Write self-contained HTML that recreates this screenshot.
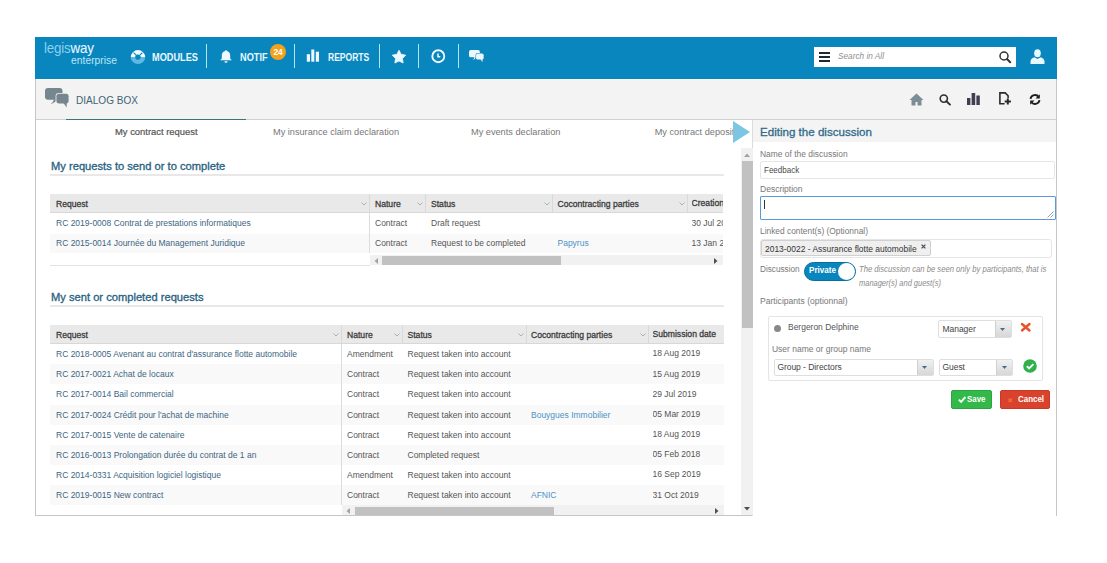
<!DOCTYPE html><html><head><meta charset="utf-8"><style>
html,body{margin:0;padding:0;background:#fff;width:1107px;height:563px;overflow:hidden}
body{position:relative;font-family:"Liberation Sans",sans-serif}
.t{position:absolute;white-space:nowrap}
.r{position:absolute;box-sizing:border-box}
svg.r{overflow:visible}
</style></head><body>
<div class="r" style="left:35px;top:37px;width:1022px;height:479px;border:1px solid #c6c6c6;background:#fff"></div>
<div class="r" style="left:35px;top:37px;width:1022px;height:42px;background:#0886bd"></div>
<div class="t" style="left:43.8px;top:40.10px;color:#555;font-size:15px;line-height:15px;font-weight:normal;font-style:normal;letter-spacing:-0.2px;transform:scaleX(0.89);transform-origin:0 0"><span style="color:#8ccfee">legis</span><span style="color:#e8f7ff;-webkit-text-stroke:0.1px #e8f7ff">way</span></div>
<div class="t" style="left:70.8px;top:55.23px;color:#b9e6f8;font-size:10.6px;line-height:10.6px;font-weight:normal;font-style:normal;letter-spacing:0px;transform:scaleX(0.9765);transform-origin:0 0;">enterprise</div>
<svg class="r" style="left:129.7px;top:49px" width="16" height="16" viewBox="0 0 16 16"><path d="M3 8.3A5 5 0 0 1 13 8.3" fill="none" stroke="#f0faff" stroke-width="4.4"/><path d="M3 7.9A5 5 0 0 0 13 7.9" fill="none" stroke="#5fb9e2" stroke-width="4.4"/><path d="M3.6 3.6L6.2 6.2M12.4 3.6L9.8 6.2" stroke="#0886bd" stroke-width="1.1"/></svg>
<div class="t" style="left:152px;top:52.03px;color:#eaf8ff;font-size:10.6px;line-height:10.6px;font-weight:bold;font-style:normal;letter-spacing:0px;transform:scaleX(0.8684);transform-origin:0 0;">MODULES</div>
<div class="r" style="left:206.2px;top:43.5px;width:1.3px;height:24.5px;background:#b5e4f7"></div>
<div class="r" style="left:294px;top:43.5px;width:1.3px;height:24.5px;background:#b5e4f7"></div>
<div class="r" style="left:378.5px;top:43.5px;width:1.3px;height:24.5px;background:#b5e4f7"></div>
<div class="r" style="left:418px;top:43.5px;width:1.3px;height:24.5px;background:#b5e4f7"></div>
<div class="r" style="left:458px;top:43.5px;width:1.3px;height:24.5px;background:#b5e4f7"></div>
<svg class="r" style="left:219px;top:49px" width="14" height="14" viewBox="0 0 14 14"><path d="M7 1.2c-.6 0-1 .4-1 .9C3.7 2.7 2.8 4.6 2.8 6.8v2.6L1.2 11.3h11.6L11.2 9.4V6.8C11.2 4.6 10.3 2.7 8 2.1 8 1.6 7.6 1.2 7 1.2z" fill="#eef9ff"/><path d="M5.4 12.2a1.6 1.6 0 0 0 3.2 0z" fill="#eef9ff"/></svg>
<div class="t" style="left:240.2px;top:52.03px;color:#eaf8ff;font-size:10.6px;line-height:10.6px;font-weight:bold;font-style:normal;letter-spacing:0px;transform:scaleX(0.8684);transform-origin:0 0;">NOTIF</div>
<div class="r" style="left:270px;top:44px;width:16px;height:16px;border-radius:50%;background:#f4a21b"></div>
<div class="t" style="left:128px;width:300px;text-align:center;top:48.40px;font-size:8.5px;line-height:8.5px;color:#fff;font-weight:bold;letter-spacing:-0.3px;">24</div>
<svg class="r" style="left:306px;top:49px" width="14" height="14" viewBox="0 0 14 14"><rect x="0.8" y="5.2" width="3.2" height="7.5" fill="#eef9ff"/><rect x="5.3" y="0.5" width="3" height="12.2" fill="#eef9ff"/><rect x="9.8" y="2.7" width="3.2" height="10" fill="#eef9ff"/></svg>
<div class="t" style="left:328.4px;top:52.03px;color:#eaf8ff;font-size:10.6px;line-height:10.6px;font-weight:bold;font-style:normal;letter-spacing:0px;transform:scaleX(0.8044);transform-origin:0 0;">REPORTS</div>
<svg class="r" style="left:391.5px;top:50.1px" width="14" height="14" viewBox="0 0 14 14"><path d="M7.00 0.30 L9.12 4.39 L13.66 5.14 L10.42 8.41 L11.11 12.96 L7.00 10.90 L2.89 12.96 L3.58 8.41 L0.34 5.14 L4.88 4.39z" fill="#eef9ff" stroke="#eef9ff" stroke-width="0.9" stroke-linejoin="round"/></svg>
<svg class="r" style="left:431.2px;top:49.2px" width="15" height="15" viewBox="0 0 15 15"><circle cx="7.3" cy="7.2" r="6" fill="none" stroke="#f2fbff" stroke-width="1.9"/><path d="M7 4.6v3.1h2.3" fill="none" stroke="#f2fbff" stroke-width="1.5"/></svg>
<svg class="r" style="left:468.8px;top:49.8px" width="15" height="12" viewBox="0 0 15 12"><g transform="scale(0.62)"><path d="M3 0h11.5a3 3 0 0 1 3 3v5.7a3 3 0 0 1-3 3H11.5Q10.5 14.8 5.6 16Q8.6 14 8.8 11.7H3a3 3 0 0 1-3-3V3a3 3 0 0 1 3-3z" fill="#eef9ff"/><rect x="10.6" y="4.9" width="13.8" height="11.3" rx="3.2" fill="#0886bd"/><rect x="11.4" y="5.7" width="12.2" height="9.7" rx="2.6" fill="#eef9ff"/><path d="M18.5 15L21.6 19.6 21.8 15z" fill="#eef9ff"/></g></svg>
<div class="r" style="left:814px;top:47px;width:202.3px;height:20px;background:#fff"></div>
<div class="r" style="left:819px;top:52px;width:11.3px;height:2px;background:#1c2933"></div>
<div class="r" style="left:819px;top:56px;width:11.3px;height:2px;background:#1c2933"></div>
<div class="r" style="left:819px;top:60px;width:11.3px;height:2px;background:#1c2933"></div>
<div class="t" style="left:838.4px;top:52.35px;color:#8f8f8f;font-size:8.8px;line-height:8.8px;font-weight:normal;font-style:italic;letter-spacing:0px;transform:scaleX(0.9376);transform-origin:0 0;">Search in All</div>
<svg class="r" style="left:999px;top:51px" width="13" height="13" viewBox="0 0 13 13"><circle cx="5" cy="5" r="4" fill="none" stroke="#333" stroke-width="1.5"/><path d="M8 8l3.2 3.2" stroke="#333" stroke-width="2" stroke-linecap="round"/></svg>
<svg class="r" style="left:1030px;top:49px" width="15" height="15" viewBox="0 0 15 15"><ellipse cx="7.5" cy="4.3" rx="3.3" ry="4" fill="#e8f8ff"/><path d="M0.5 15v-2.5c0-2 1.3-3.5 3.8-4.3l3.2 1.8 3.2-1.8c2.5.8 3.8 2.3 3.8 4.3V15z" fill="#e8f8ff"/></svg>
<div class="r" style="left:36px;top:79px;width:1020px;height:41px;background:#f3f3f3;border-bottom:1.5px solid #d0d0d0;border-top:1px solid #fafafa"></div>
<svg class="r" style="left:44.5px;top:88px" width="24" height="20" viewBox="0 0 24 20"><g transform="scale(1.0)"><path d="M3 0h11.5a3 3 0 0 1 3 3v5.7a3 3 0 0 1-3 3H11.5Q10.5 14.8 5.6 16Q8.6 14 8.8 11.7H3a3 3 0 0 1-3-3V3a3 3 0 0 1 3-3z" fill="#76868f"/><rect x="10.6" y="4.9" width="13.8" height="11.3" rx="3.2" fill="#f2f2f2"/><rect x="11.4" y="5.7" width="12.2" height="9.7" rx="2.6" fill="#76868f"/><path d="M18.5 15L21.6 19.6 21.8 15z" fill="#76868f"/></g></svg>
<div class="t" style="left:76px;top:95.03px;color:#3f6373;font-size:10.6px;line-height:10.6px;font-weight:normal;font-style:normal;letter-spacing:0px;transform:scaleX(0.9486);transform-origin:0 0;">DIALOG BOX</div>
<svg class="r" style="left:909px;top:93px" width="15" height="13" viewBox="0 0 15 13"><path d="M7.5 0.5L0.5 7h2v5.5h4v-3.5h2v3.5h4V7h2z" fill="#7d8d97"/></svg>
<svg class="r" style="left:938.5px;top:94px" width="13" height="11" viewBox="0 0 13 11"><circle cx="4.8" cy="4.6" r="3.6" fill="none" stroke="#2d2d2d" stroke-width="1.6"/><path d="M7.4 7.2l3.6 3.4" stroke="#2d2d2d" stroke-width="1.9" stroke-linecap="round"/></svg>
<svg class="r" style="left:967px;top:93px" width="13" height="12" viewBox="0 0 13 12"><rect x="0" y="5" width="3.4" height="7" fill="#3e3d52"/><rect x="4.6" y="0" width="3.6" height="12" fill="#3e3d52"/><rect x="9.4" y="2.5" width="3.4" height="9.5" fill="#3e3d52"/></svg>
<svg class="r" style="left:999px;top:92px" width="13" height="13" viewBox="0 0 13 13"><path d="M5.6 11.7H0.9V0.9h5.3l2.9 2.9v2.4" fill="none" stroke="#2b2b2b" stroke-width="1.6"/><path d="M8.8 6.4v6.2M5.7 9.5h6.2" stroke="#2b2b2b" stroke-width="2"/></svg>
<svg class="r" style="left:1028.5px;top:93.5px" width="12" height="11" viewBox="0 0 12 11"><path d="M1.5 4.8A4.6 4.6 0 0 1 9.8 3" fill="none" stroke="#1e1e1e" stroke-width="1.9"/><path d="M10.8 0.2v4.3H6.5z" fill="#1e1e1e"/><path d="M10.5 6.2A4.6 4.6 0 0 1 2.2 8" fill="none" stroke="#1e1e1e" stroke-width="1.9"/><path d="M1.2 10.8V6.5h4.3z" fill="#1e1e1e"/></svg>
<div class="r" style="left:66px;top:118.6px;width:180px;height:1.8px;background:#3b7479"></div>
<div class="t" style="left:115px;top:127.36px;color:#555;font-size:9.5px;line-height:9.5px;font-weight:normal;font-style:normal;letter-spacing:0px;-webkit-text-stroke:0.2px #555;transform:scaleX(0.9889);transform-origin:0 0;">My contract request</div>
<div class="t" style="left:272.7px;top:127.34px;color:#777;font-size:9.4px;line-height:9.4px;font-weight:normal;font-style:normal;letter-spacing:0px;transform:scaleX(0.9790);transform-origin:0 0;">My insurance claim declaration</div>
<div class="t" style="left:470.6px;top:127.34px;color:#777;font-size:9.4px;line-height:9.4px;font-weight:normal;font-style:normal;letter-spacing:0px;transform:scaleX(0.9802);transform-origin:0 0;">My events declaration</div>
<div class="t" style="left:654.7px;top:124.65px;width:78px;overflow:hidden;font-size:9.2px;line-height:14.72px;color:#777;font-weight:normal;font-style:normal;letter-spacing:0px;">My contract deposit request</div>
<div class="r" style="left:752px;top:119.5px;width:304px;height:396px;background:#fff;border-left:1px solid #dcdcdc"></div>
<div class="r" style="left:753px;top:120px;width:303px;height:21.5px;background:#f4f4f4"></div>
<svg class="r" style="left:732.5px;top:120.5px" width="17" height="22" viewBox="0 0 17 22"><path d="M0 0L17 11L0 22z" fill="#7cc6e3"/></svg>
<div class="t" style="left:760.4px;top:127.36px;color:#2f6a89;font-size:10.8px;line-height:10.8px;font-weight:normal;font-style:normal;letter-spacing:0px;-webkit-text-stroke:0.28px #2f6a89;transform:scaleX(1.0724);transform-origin:0 0;">Editing the discussion</div>
<div class="r" style="left:741px;top:148px;width:11.5px;height:367px;background:#f1f1f1"></div>
<div class="r" style="left:742px;top:160.5px;width:10.5px;height:167.5px;background:#c1c1c1"></div>
<svg class="r" style="left:744px;top:152.5px" width="6" height="4" viewBox="0 0 6 4"><path d="M0 4L3 0.5L6 4z" fill="#a3a3a3"/></svg>
<svg class="r" style="left:744px;top:507px" width="6" height="4" viewBox="0 0 6 4"><path d="M0 0L3 3.5L6 0z" fill="#505050"/></svg>
<div class="t" style="left:50.7px;top:160.59px;color:#2a6282;font-size:11px;line-height:11px;font-weight:normal;font-style:normal;letter-spacing:0px;-webkit-text-stroke:0.32px #2a6282;transform:scaleX(1.0145);transform-origin:0 0;">My requests to send or to complete</div>
<div class="r" style="left:50px;top:173.8px;width:674px;height:2px;background:#e8e8e8"></div>
<div class="r" style="left:50px;top:194px;width:673px;height:19px;background:#e9e9e9;border-bottom:1px solid #d8d8d8"></div>
<div class="t" style="left:56px;top:200.02px;color:#3a3a3a;font-size:8.6px;line-height:8.6px;font-weight:normal;font-style:normal;letter-spacing:0px;-webkit-text-stroke:0.28px #3a3a3a;">Request</div>
<div class="t" style="left:375px;top:200.02px;color:#3a3a3a;font-size:8.6px;line-height:8.6px;font-weight:normal;font-style:normal;letter-spacing:0px;-webkit-text-stroke:0.28px #3a3a3a;">Nature</div>
<div class="r" style="left:369px;top:194px;width:1px;height:19px;background:#d9d9d9"></div>
<svg class="r" style="left:361px;top:201.5px" width="6" height="4" viewBox="0 0 6 4"><path d="M0.5 0.5L3 3L5.5 0.5" fill="none" stroke="#a8a8a8" stroke-width="0.9"/></svg>
<div class="t" style="left:431px;top:200.02px;color:#3a3a3a;font-size:8.6px;line-height:8.6px;font-weight:normal;font-style:normal;letter-spacing:0px;-webkit-text-stroke:0.28px #3a3a3a;">Status</div>
<div class="r" style="left:425px;top:194px;width:1px;height:19px;background:#d9d9d9"></div>
<svg class="r" style="left:417px;top:201.5px" width="6" height="4" viewBox="0 0 6 4"><path d="M0.5 0.5L3 3L5.5 0.5" fill="none" stroke="#a8a8a8" stroke-width="0.9"/></svg>
<div class="t" style="left:557.5px;top:200.02px;color:#3a3a3a;font-size:8.6px;line-height:8.6px;font-weight:normal;font-style:normal;letter-spacing:0px;-webkit-text-stroke:0.28px #3a3a3a;">Cocontracting parties</div>
<div class="r" style="left:551.5px;top:194px;width:1px;height:19px;background:#d9d9d9"></div>
<svg class="r" style="left:543.5px;top:201.5px" width="6" height="4" viewBox="0 0 6 4"><path d="M0.5 0.5L3 3L5.5 0.5" fill="none" stroke="#a8a8a8" stroke-width="0.9"/></svg>
<div class="t" style="left:691.5px;top:197.44px;width:31.5px;overflow:hidden;font-size:8.6px;line-height:13.76px;color:#3a3a3a;font-weight:normal;font-style:normal;letter-spacing:0px;-webkit-text-stroke:0.28px #3a3a3a">Creation date</div>
<div class="r" style="left:686.5px;top:194px;width:1px;height:19px;background:#d9d9d9"></div>
<svg class="r" style="left:678.5px;top:201.5px" width="6" height="4" viewBox="0 0 6 4"><path d="M0.5 0.5L3 3L5.5 0.5" fill="none" stroke="#a8a8a8" stroke-width="0.9"/></svg>
<div class="t" style="left:56px;top:219.30px;color:#3d6683;font-size:8.5px;line-height:8.5px;font-weight:normal;font-style:normal;letter-spacing:0px;">RC 2019-0008 Contrat de prestations informatiques</div>
<div class="t" style="left:375px;top:219.30px;color:#555;font-size:8.5px;line-height:8.5px;font-weight:normal;font-style:normal;letter-spacing:0px;">Contract</div>
<div class="t" style="left:431px;top:219.30px;color:#555;font-size:8.5px;line-height:8.5px;font-weight:normal;font-style:normal;letter-spacing:0px;">Draft request</div>
<div class="t" style="left:691.5px;top:216.75px;width:31.5px;overflow:hidden;font-size:8.5px;line-height:13.60px;color:#555;font-weight:normal;font-style:normal;letter-spacing:0px;">30 Jul 2019</div>
<div class="r" style="left:50px;top:233.57px;width:673px;height:19.9px;background:#f9f9f9"></div>
<div class="t" style="left:56px;top:239.47px;color:#3d6683;font-size:8.5px;line-height:8.5px;font-weight:normal;font-style:normal;letter-spacing:0px;">RC 2015-0014 Journée du Management Juridique</div>
<div class="t" style="left:375px;top:239.47px;color:#555;font-size:8.5px;line-height:8.5px;font-weight:normal;font-style:normal;letter-spacing:0px;">Contract</div>
<div class="t" style="left:431px;top:239.47px;color:#555;font-size:8.5px;line-height:8.5px;font-weight:normal;font-style:normal;letter-spacing:0px;">Request to be completed</div>
<div class="t" style="left:557.5px;top:239.47px;color:#4a93c4;font-size:8.5px;line-height:8.5px;font-weight:normal;font-style:normal;letter-spacing:0px;">Papyrus</div>
<div class="t" style="left:691.5px;top:236.92px;width:31.5px;overflow:hidden;font-size:8.5px;line-height:13.60px;color:#555;font-weight:normal;font-style:normal;letter-spacing:0px;">13 Jan 2020</div>
<div class="r" style="left:369px;top:213px;width:1px;height:40.34px;background:#dcdcdc"></div>
<div class="r" style="left:370px;top:254.5px;width:353px;height:10.5px;background:#f1f1f1"></div>
<div class="r" style="left:382px;top:256.0px;width:179px;height:8.5px;background:#c1c1c1"></div>
<svg class="r" style="left:374px;top:257.5px" width="4" height="6" viewBox="0 0 4 6"><path d="M4 0L0.5 3L4 6z" fill="#a3a3a3"/></svg>
<svg class="r" style="left:714px;top:257.5px" width="4" height="6" viewBox="0 0 4 6"><path d="M0 0L3.5 3L0 6z" fill="#505050"/></svg>
<div class="r" style="left:50px;top:265px;width:320px;height:1px;background:#e2e2e2"></div>
<div class="t" style="left:50.7px;top:291.99px;color:#2a6282;font-size:11px;line-height:11px;font-weight:normal;font-style:normal;letter-spacing:0px;-webkit-text-stroke:0.32px #2a6282;transform:scaleX(1.0139);transform-origin:0 0;">My sent or completed requests</div>
<div class="r" style="left:50px;top:305px;width:674px;height:2px;background:#e8e8e8"></div>
<div class="r" style="left:50px;top:325px;width:674px;height:18.69999999999999px;background:#e9e9e9;border-bottom:1px solid #d8d8d8"></div>
<div class="t" style="left:56px;top:331.02px;color:#3a3a3a;font-size:8.6px;line-height:8.6px;font-weight:normal;font-style:normal;letter-spacing:0px;-webkit-text-stroke:0.28px #3a3a3a;">Request</div>
<div class="t" style="left:347px;top:331.02px;color:#3a3a3a;font-size:8.6px;line-height:8.6px;font-weight:normal;font-style:normal;letter-spacing:0px;-webkit-text-stroke:0.28px #3a3a3a;">Nature</div>
<div class="r" style="left:341px;top:325px;width:1px;height:18.69999999999999px;background:#d9d9d9"></div>
<svg class="r" style="left:333px;top:332.5px" width="6" height="4" viewBox="0 0 6 4"><path d="M0.5 0.5L3 3L5.5 0.5" fill="none" stroke="#a8a8a8" stroke-width="0.9"/></svg>
<div class="t" style="left:407.5px;top:331.02px;color:#3a3a3a;font-size:8.6px;line-height:8.6px;font-weight:normal;font-style:normal;letter-spacing:0px;-webkit-text-stroke:0.28px #3a3a3a;">Status</div>
<div class="r" style="left:401.5px;top:325px;width:1px;height:18.69999999999999px;background:#d9d9d9"></div>
<svg class="r" style="left:393.5px;top:332.5px" width="6" height="4" viewBox="0 0 6 4"><path d="M0.5 0.5L3 3L5.5 0.5" fill="none" stroke="#a8a8a8" stroke-width="0.9"/></svg>
<div class="t" style="left:531px;top:331.02px;color:#3a3a3a;font-size:8.6px;line-height:8.6px;font-weight:normal;font-style:normal;letter-spacing:0px;-webkit-text-stroke:0.28px #3a3a3a;">Cocontracting parties</div>
<div class="r" style="left:525.5px;top:325px;width:1px;height:18.69999999999999px;background:#d9d9d9"></div>
<svg class="r" style="left:517.5px;top:332.5px" width="6" height="4" viewBox="0 0 6 4"><path d="M0.5 0.5L3 3L5.5 0.5" fill="none" stroke="#a8a8a8" stroke-width="0.9"/></svg>
<div class="t" style="left:652.5px;top:328.44px;width:71.5px;overflow:hidden;font-size:8.6px;line-height:13.76px;color:#3a3a3a;font-weight:normal;font-style:normal;letter-spacing:0px;-webkit-text-stroke:0.28px #3a3a3a">Submission date</div>
<div class="r" style="left:647.5px;top:325px;width:1px;height:18.69999999999999px;background:#d9d9d9"></div>
<svg class="r" style="left:639.5px;top:332.5px" width="6" height="4" viewBox="0 0 6 4"><path d="M0.5 0.5L3 3L5.5 0.5" fill="none" stroke="#a8a8a8" stroke-width="0.9"/></svg>
<div class="t" style="left:56px;top:350.00px;color:#3d6683;font-size:8.5px;line-height:8.5px;font-weight:normal;font-style:normal;letter-spacing:0px;">RC 2018-0005 Avenant au contrat d'assurance flotte automobile</div>
<div class="t" style="left:347px;top:350.00px;color:#555;font-size:8.5px;line-height:8.5px;font-weight:normal;font-style:normal;letter-spacing:0px;">Amendment</div>
<div class="t" style="left:407.5px;top:350.00px;color:#555;font-size:8.5px;line-height:8.5px;font-weight:normal;font-style:normal;letter-spacing:0px;">Request taken into account</div>
<div class="t" style="left:652.5px;top:347.45px;width:71.5px;overflow:hidden;font-size:8.5px;line-height:13.60px;color:#555;font-weight:normal;font-style:normal;letter-spacing:0px;">18 Aug 2019</div>
<div class="r" style="left:50px;top:364.27px;width:674px;height:19.9px;background:#f9f9f9"></div>
<div class="t" style="left:56px;top:370.17px;color:#3d6683;font-size:8.5px;line-height:8.5px;font-weight:normal;font-style:normal;letter-spacing:0px;">RC 2017-0021 Achat de locaux</div>
<div class="t" style="left:347px;top:370.17px;color:#555;font-size:8.5px;line-height:8.5px;font-weight:normal;font-style:normal;letter-spacing:0px;">Contract</div>
<div class="t" style="left:407.5px;top:370.17px;color:#555;font-size:8.5px;line-height:8.5px;font-weight:normal;font-style:normal;letter-spacing:0px;">Request taken into account</div>
<div class="t" style="left:652.5px;top:367.62px;width:71.5px;overflow:hidden;font-size:8.5px;line-height:13.60px;color:#555;font-weight:normal;font-style:normal;letter-spacing:0px;">15 Aug 2019</div>
<div class="t" style="left:56px;top:390.34px;color:#3d6683;font-size:8.5px;line-height:8.5px;font-weight:normal;font-style:normal;letter-spacing:0px;">RC 2017-0014 Bail commercial</div>
<div class="t" style="left:347px;top:390.34px;color:#555;font-size:8.5px;line-height:8.5px;font-weight:normal;font-style:normal;letter-spacing:0px;">Contract</div>
<div class="t" style="left:407.5px;top:390.34px;color:#555;font-size:8.5px;line-height:8.5px;font-weight:normal;font-style:normal;letter-spacing:0px;">Request taken into account</div>
<div class="t" style="left:652.5px;top:387.79px;width:71.5px;overflow:hidden;font-size:8.5px;line-height:13.60px;color:#555;font-weight:normal;font-style:normal;letter-spacing:0px;">29 Jul 2019</div>
<div class="r" style="left:50px;top:404.60999999999996px;width:674px;height:19.9px;background:#f9f9f9"></div>
<div class="t" style="left:56px;top:410.51px;color:#3d6683;font-size:8.5px;line-height:8.5px;font-weight:normal;font-style:normal;letter-spacing:0px;">RC 2017-0024 Crédit pour l'achat de machine</div>
<div class="t" style="left:347px;top:410.51px;color:#555;font-size:8.5px;line-height:8.5px;font-weight:normal;font-style:normal;letter-spacing:0px;">Contract</div>
<div class="t" style="left:407.5px;top:410.51px;color:#555;font-size:8.5px;line-height:8.5px;font-weight:normal;font-style:normal;letter-spacing:0px;">Request taken into account</div>
<div class="t" style="left:531px;top:410.51px;color:#4a93c4;font-size:8.5px;line-height:8.5px;font-weight:normal;font-style:normal;letter-spacing:0px;">Bouygues Immobilier</div>
<div class="t" style="left:652.5px;top:407.96px;width:71.5px;overflow:hidden;font-size:8.5px;line-height:13.60px;color:#555;font-weight:normal;font-style:normal;letter-spacing:0px;">05 Mar 2019</div>
<div class="t" style="left:56px;top:430.68px;color:#3d6683;font-size:8.5px;line-height:8.5px;font-weight:normal;font-style:normal;letter-spacing:0px;">RC 2017-0015 Vente de catenaire</div>
<div class="t" style="left:347px;top:430.68px;color:#555;font-size:8.5px;line-height:8.5px;font-weight:normal;font-style:normal;letter-spacing:0px;">Contract</div>
<div class="t" style="left:407.5px;top:430.68px;color:#555;font-size:8.5px;line-height:8.5px;font-weight:normal;font-style:normal;letter-spacing:0px;">Request taken into account</div>
<div class="t" style="left:652.5px;top:428.13px;width:71.5px;overflow:hidden;font-size:8.5px;line-height:13.60px;color:#555;font-weight:normal;font-style:normal;letter-spacing:0px;">18 Aug 2019</div>
<div class="r" style="left:50px;top:444.95px;width:674px;height:19.9px;background:#f9f9f9"></div>
<div class="t" style="left:56px;top:450.85px;color:#3d6683;font-size:8.5px;line-height:8.5px;font-weight:normal;font-style:normal;letter-spacing:0px;">RC 2016-0013 Prolongation durée du contrat de 1 an</div>
<div class="t" style="left:347px;top:450.85px;color:#555;font-size:8.5px;line-height:8.5px;font-weight:normal;font-style:normal;letter-spacing:0px;">Contract</div>
<div class="t" style="left:407.5px;top:450.85px;color:#555;font-size:8.5px;line-height:8.5px;font-weight:normal;font-style:normal;letter-spacing:0px;">Completed request</div>
<div class="t" style="left:652.5px;top:448.30px;width:71.5px;overflow:hidden;font-size:8.5px;line-height:13.60px;color:#555;font-weight:normal;font-style:normal;letter-spacing:0px;">05 Feb 2018</div>
<div class="t" style="left:56px;top:471.02px;color:#3d6683;font-size:8.5px;line-height:8.5px;font-weight:normal;font-style:normal;letter-spacing:0px;">RC 2014-0331 Acquisition logiciel logistique</div>
<div class="t" style="left:347px;top:471.02px;color:#555;font-size:8.5px;line-height:8.5px;font-weight:normal;font-style:normal;letter-spacing:0px;">Amendment</div>
<div class="t" style="left:407.5px;top:471.02px;color:#555;font-size:8.5px;line-height:8.5px;font-weight:normal;font-style:normal;letter-spacing:0px;">Request taken into account</div>
<div class="t" style="left:652.5px;top:468.47px;width:71.5px;overflow:hidden;font-size:8.5px;line-height:13.60px;color:#555;font-weight:normal;font-style:normal;letter-spacing:0px;">16 Sep 2019</div>
<div class="r" style="left:50px;top:485.28999999999996px;width:674px;height:19.9px;background:#f9f9f9"></div>
<div class="t" style="left:56px;top:491.19px;color:#3d6683;font-size:8.5px;line-height:8.5px;font-weight:normal;font-style:normal;letter-spacing:0px;">RC 2019-0015 New contract</div>
<div class="t" style="left:347px;top:491.19px;color:#555;font-size:8.5px;line-height:8.5px;font-weight:normal;font-style:normal;letter-spacing:0px;">Contract</div>
<div class="t" style="left:407.5px;top:491.19px;color:#555;font-size:8.5px;line-height:8.5px;font-weight:normal;font-style:normal;letter-spacing:0px;">Request taken into account</div>
<div class="t" style="left:531px;top:491.19px;color:#4a93c4;font-size:8.5px;line-height:8.5px;font-weight:normal;font-style:normal;letter-spacing:0px;">AFNIC</div>
<div class="t" style="left:652.5px;top:488.64px;width:71.5px;overflow:hidden;font-size:8.5px;line-height:13.60px;color:#555;font-weight:normal;font-style:normal;letter-spacing:0px;">31 Oct 2019</div>
<div class="r" style="left:341px;top:343.7px;width:1px;height:161.36px;background:#dcdcdc"></div>
<div class="r" style="left:342px;top:505px;width:382px;height:10px;background:#f1f1f1"></div>
<div class="r" style="left:355px;top:506.5px;width:199px;height:8px;background:#c1c1c1"></div>
<svg class="r" style="left:346px;top:508px" width="4" height="6" viewBox="0 0 4 6"><path d="M4 0L0.5 3L4 6z" fill="#a3a3a3"/></svg>
<svg class="r" style="left:715px;top:508px" width="4" height="6" viewBox="0 0 4 6"><path d="M0 0L3.5 3L0 6z" fill="#505050"/></svg>
<div class="t" style="left:760.2px;top:149.77px;color:#777;font-size:8.3px;line-height:8.3px;font-weight:normal;font-style:normal;letter-spacing:0px;transform:scaleX(1.0157);transform-origin:0 0;">Name of the discussion</div>
<div class="r" style="left:760px;top:161px;width:295px;height:17.5px;background:#fff;border:1px solid #e6e6e6;border-radius:2px"></div>
<div class="t" style="left:764.2px;top:165.59px;color:#4a4a4a;font-size:8.4px;line-height:8.4px;font-weight:normal;font-style:normal;letter-spacing:0px;transform:scaleX(0.9570);transform-origin:0 0;">Feedback</div>
<div class="t" style="left:760.2px;top:185.17px;color:#777;font-size:8.3px;line-height:8.3px;font-weight:normal;font-style:normal;letter-spacing:0px;transform:scaleX(1.0261);transform-origin:0 0;">Description</div>
<div class="r" style="left:760px;top:196.4px;width:295.5px;height:23.3px;background:#fff;border:1.5px solid #5b9bd5;border-radius:1px"></div>
<div class="r" style="left:764px;top:200px;width:1px;height:9px;background:#333"></div>
<svg class="r" style="left:1047px;top:211px" width="7" height="7" viewBox="0 0 7 7"><path d="M6.5 0.5L0.5 6.5M6.5 3.5L3.5 6.5" stroke="#888" stroke-width="0.8"/></svg>
<div class="t" style="left:760.2px;top:226.97px;color:#777;font-size:8.3px;line-height:8.3px;font-weight:normal;font-style:normal;letter-spacing:0px;transform:scaleX(1.0093);transform-origin:0 0;">Linked content(s) (Optionnal)</div>
<div class="r" style="left:760px;top:239px;width:291.5px;height:18.8px;background:#fff;border:1px solid #e6e6e6;border-radius:3px"></div>
<div class="r" style="left:761.2px;top:240.2px;width:169.5px;height:16px;background:#efefef;border:1px solid #d0d0d0;border-radius:2px"></div>
<div class="t" style="left:765.4px;top:244.94px;color:#333;font-size:8.7px;line-height:8.7px;font-weight:normal;font-style:normal;letter-spacing:0px;transform:scaleX(0.9718);transform-origin:0 0;">2013-0022 - Assurance flotte automobile</div>
<svg class="r" style="left:921.3px;top:244.3px" width="5" height="5" viewBox="0 0 5 5"><path d="M0.6 0.6L4.4 4.4M4.4 0.6L0.6 4.4" stroke="#4a4f5a" stroke-width="1.3"/></svg>
<div class="t" style="left:760.2px;top:265.17px;color:#777;font-size:8.3px;line-height:8.3px;font-weight:normal;font-style:normal;letter-spacing:0px;transform:scaleX(0.9869);transform-origin:0 0;">Discussion</div>
<div class="r" style="left:804px;top:261.8px;width:52px;height:19px;background:#0886bd;border-radius:10px;border:1px solid #0a6e9c"></div>
<div class="r" style="left:838px;top:263px;width:17px;height:17px;border-radius:50%;background:#fff"></div>
<div class="t" style="left:808.7px;top:266.12px;color:#fff;font-size:8.6px;line-height:8.6px;font-weight:bold;font-style:normal;letter-spacing:0px;transform:scaleX(0.9452);transform-origin:0 0;">Private</div>
<div class="t" style="left:859.3px;top:264.97px;color:#8a8a8a;font-size:8.3px;line-height:8.3px;font-weight:normal;font-style:italic;letter-spacing:0px;transform:scaleX(0.9234);transform-origin:0 0;">The discussion can be seen only by participants, that is</div>
<div class="t" style="left:859.3px;top:279.27px;color:#8a8a8a;font-size:8.3px;line-height:8.3px;font-weight:normal;font-style:italic;letter-spacing:0px;transform:scaleX(0.9014);transform-origin:0 0;">manager(s) and guest(s)</div>
<div class="t" style="left:760.2px;top:296.97px;color:#777;font-size:8.3px;line-height:8.3px;font-weight:normal;font-style:normal;letter-spacing:0px;transform:scaleX(1.0323);transform-origin:0 0;">Participants (optionnal)</div>
<div class="r" style="left:767.5px;top:315.5px;width:275px;height:65px;background:#fff;border:1px solid #e4e4e4;border-radius:2px"></div>
<div class="r" style="left:773.5px;top:325px;width:7px;height:7px;border-radius:50%;background:#888"></div>
<div class="t" style="left:787.6px;top:322.72px;color:#555;font-size:8.6px;line-height:8.6px;font-weight:normal;font-style:normal;letter-spacing:0px;transform:scaleX(0.9850);transform-origin:0 0;">Bergeron Delphine</div>
<div class="r" style="left:938.2px;top:320.3px;width:73.6px;height:17.4px;background:#fff;border:1px solid #dedede;border-radius:2px"></div>
<div class="r" style="left:994.8000000000001px;top:321.3px;width:16px;height:15.399999999999999px;background:linear-gradient(#f0f0f0,#d7d7d7);border-left:1px solid #d0d0d0"></div>
<svg class="r" style="left:1000.3000000000001px;top:328.0px" width="5" height="3" viewBox="0 0 5 3"><path d="M0 0h5L2.5 3z" fill="#4a6b8a"/></svg>
<div class="t" style="left:942.5px;top:325.00px;color:#444;font-size:8.5px;line-height:8.5px;font-weight:normal;font-style:normal;letter-spacing:-0.05px;">Manager</div>
<svg class="r" style="left:1020.5px;top:323.4px" width="9.5" height="8.5" viewBox="0 0 9.5 8.5"><path d="M1 1L8.5 7.5M8.5 1L1 7.5" stroke="#e8522a" stroke-width="2.4" stroke-linecap="round"/></svg>
<div class="t" style="left:772px;top:345.32px;color:#777;font-size:8.6px;line-height:8.6px;font-weight:normal;font-style:normal;letter-spacing:0px;transform:scaleX(0.9869);transform-origin:0 0;">User name or group name</div>
<div class="r" style="left:773.6px;top:359px;width:160.1px;height:16.5px;background:#fff;border:1px solid #dedede;border-radius:2px"></div>
<div class="r" style="left:916.7px;top:360px;width:16px;height:14.5px;background:linear-gradient(#f0f0f0,#d7d7d7);border-left:1px solid #d0d0d0"></div>
<svg class="r" style="left:922.2px;top:366.25px" width="5" height="3" viewBox="0 0 5 3"><path d="M0 0h5L2.5 3z" fill="#4a6b8a"/></svg>
<div class="t" style="left:777.4px;top:363.25px;color:#444;font-size:8.5px;line-height:8.5px;font-weight:normal;font-style:normal;letter-spacing:-0.05px;">Group - Directors</div>
<div class="r" style="left:939.2px;top:359px;width:73.8px;height:16.5px;background:#fff;border:1px solid #dedede;border-radius:2px"></div>
<div class="r" style="left:996.0px;top:360px;width:16px;height:14.5px;background:linear-gradient(#f0f0f0,#d7d7d7);border-left:1px solid #d0d0d0"></div>
<svg class="r" style="left:1001.5px;top:366.25px" width="5" height="3" viewBox="0 0 5 3"><path d="M0 0h5L2.5 3z" fill="#4a6b8a"/></svg>
<div class="t" style="left:942.5px;top:363.25px;color:#444;font-size:8.5px;line-height:8.5px;font-weight:normal;font-style:normal;letter-spacing:-0.05px;">Guest</div>
<svg class="r" style="left:1022.5px;top:359px" width="14" height="14" viewBox="0 0 14 14"><circle cx="7" cy="7" r="6.8" fill="#2db24a"/><path d="M3.8 7.2l2.3 2.3 4.3-4.3" fill="none" stroke="#fff" stroke-width="1.9"/></svg>
<div class="r" style="left:950.7px;top:390.2px;width:41.7px;height:18.8px;background:#33b84a;border-radius:2px;border:1px solid #2aa542"></div>
<svg class="r" style="left:958px;top:395.8px" width="8" height="7" viewBox="0 0 8 7"><path d="M0.8 3.6l2.3 2.3L7.4 1" fill="none" stroke="#f4fff4" stroke-width="1.9"/></svg>
<div class="t" style="left:967.4px;top:395.25px;color:#fff;font-size:8.8px;line-height:8.8px;font-weight:bold;font-style:normal;letter-spacing:0px;transform:scaleX(0.8955);transform-origin:0 0;">Save</div>
<div class="r" style="left:999.5px;top:390.2px;width:50.7px;height:18.8px;background:#d9432e;border-radius:2px;border:1px solid #c73a27"></div>
<svg class="r" style="left:1008.3px;top:397.5px" width="4.5" height="4.5" viewBox="0 0 4.5 4.5"><path d="M0.6 0.6L3.9 3.9M3.9 0.6L0.6 3.9" stroke="#f26a3a" stroke-width="1.5"/></svg>
<div class="t" style="left:1018.1px;top:395.25px;color:#fff;font-size:8.8px;line-height:8.8px;font-weight:bold;font-style:normal;letter-spacing:0px;transform:scaleX(0.9009);transform-origin:0 0;">Cancel</div>
</body></html>
